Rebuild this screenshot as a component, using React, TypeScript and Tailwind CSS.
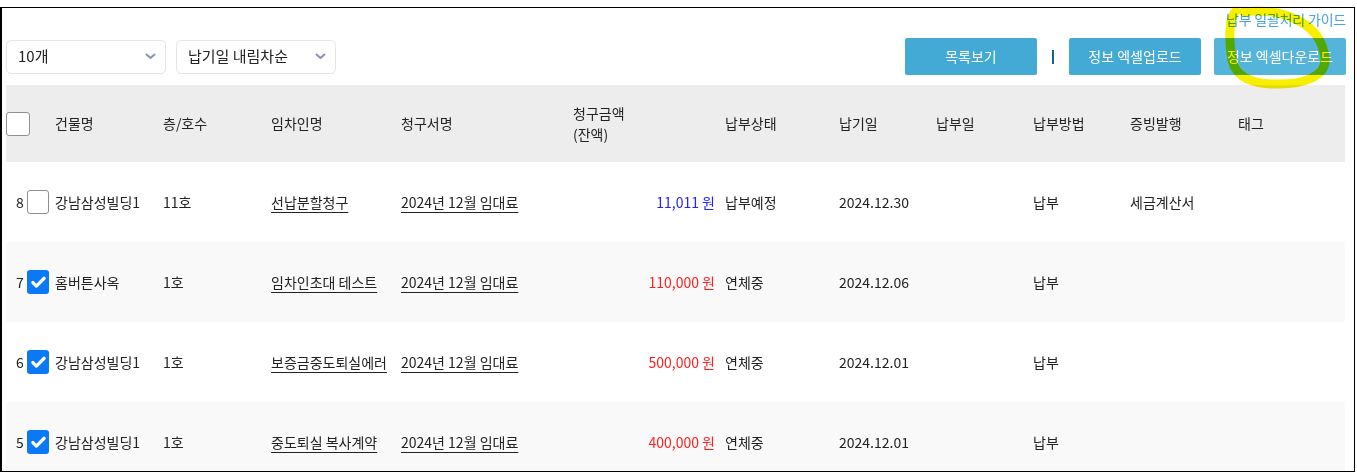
import { Check } from "lucide-react";

type Row = {
  no: number;
  checked: boolean;
  building: string;
  unit: string;
  tenant: string;
  bill: string;
  amount: string;
  overdue: boolean;
  status: string;
  due: string;
  paidAt: string;
  method: string;
  proof: string;
  tag: string;
};

const rows: Row[] = [
  { no: 8, checked: false, building: "강남삼성빌딩1", unit: "11호", tenant: "선납분할청구", bill: "2024년 12월 임대료", amount: "11,011", overdue: false, status: "납부예정", due: "2024.12.30", paidAt: "", method: "납부", proof: "세금계산서", tag: "" },
  { no: 7, checked: true, building: "홈버튼사옥", unit: "1호", tenant: "임차인초대 테스트", bill: "2024년 12월 임대료", amount: "110,000", overdue: true, status: "연체중", due: "2024.12.06", paidAt: "", method: "납부", proof: "", tag: "" },
  { no: 6, checked: true, building: "강남삼성빌딩1", unit: "1호", tenant: "보증금중도퇴실에러", bill: "2024년 12월 임대료", amount: "500,000", overdue: true, status: "연체중", due: "2024.12.01", paidAt: "", method: "납부", proof: "", tag: "" },
  { no: 5, checked: true, building: "강남삼성빌딩1", unit: "1호", tenant: "중도퇴실 복사계약", bill: "2024년 12월 임대료", amount: "400,000", overdue: true, status: "연체중", due: "2024.12.01", paidAt: "", method: "납부", proof: "", tag: "" },
];

const cols = "grid grid-cols-[157px_108px_130px_172px_152px_114px_97px_97px_97px_108px_1fr]";

function Select({ label }: { label: string }) {
  return (
    <div className="flex h-[34px] w-[160px] items-center justify-between rounded-[5px] border border-[#e4e6ea] bg-white pl-[11px] pr-[9px] text-[15px] text-[#222]">
      <span>{label}</span>
      <svg width="11" height="7" viewBox="0 0 11 7" aria-hidden="true">
        <path d="M1.5 1.5 L5.5 5 L9.5 1.5" fill="none" stroke="#8a94ab" strokeWidth="2" strokeLinecap="round" strokeLinejoin="round" />
      </svg>
    </div>
  );
}

function Box({ checked, className = "" }: { checked: boolean; className?: string }) {
  if (checked) {
    return (
      <div className={`flex items-center justify-center rounded-[3px] bg-[#0b78f6] ${className}`}>
        <Check className="h-[17px] w-[17px] text-white" strokeWidth={4.5} aria-hidden="true" />
      </div>
    );
  }
  return <div className={`rounded-[3px] border border-[#8f8f8f] bg-white ${className}`} />;
}

export default function App() {
  return (
    <div className="relative h-[472px] w-[1357px] overflow-hidden bg-white font-['Noto_Sans_CJK_KR','Noto_Sans',sans-serif] text-[14px] text-[#222]">
      <div className="mt-[7px] h-[465px] w-[1355px] overflow-hidden border border-l-2 border-black pl-[4px] pr-[8px]">
        <div className="flex h-[22px] justify-end">
          <a className="text-[14px] tracking-[-0.2px] leading-[22px] text-[#46a7d6]">납부 일괄처리 가이드</a>
        </div>

        <div className="mt-[8px] flex h-[37px] items-center">
          <div className="flex items-center gap-[10px]">
            <Select label="10개" />
            <Select label="납기일 내림차순" />
          </div>
          <div className="ml-auto flex items-center">
            <button type="button" className="h-[37px] w-[132px] rounded-[2px] bg-[#42aad4] text-[14px] text-white">목록보기</button>
            <div className="mx-[15px] h-[14px] w-[2px] bg-[#1f5f8f]" />
            <button type="button" className="h-[37px] w-[132px] rounded-[2px] bg-[#42aad4] text-[14px] text-white">정보 엑셀업로드</button>
            <button type="button" className="ml-[13px] h-[37px] w-[132px] rounded-[2px] bg-[#55b4da] text-[14px] text-white">정보 엑셀다운로드</button>
          </div>
        </div>

        <div className="mt-[10px] w-[1339px]">
          <div className={`${cols} h-[77px] items-center bg-[#ededed]`}>
            <div className="flex items-center">
              <Box checked={false} className="h-[24px] w-[24px]" />
              <span className="ml-[25px]">건물명</span>
            </div>
            <div>층/호수</div>
            <div>임차인명</div>
            <div>청구서명</div>
            <div className="leading-[21px]">
              청구금액
              <br />
              (잔액)
            </div>
            <div>납부상태</div>
            <div>납기일</div>
            <div>납부일</div>
            <div>납부방법</div>
            <div>증빙발행</div>
            <div>태그</div>
          </div>

          {rows.map((r, i) => (
            <div key={r.no} className={`${cols} h-[80px] items-center ${i % 2 === 1 ? "bg-[#f9f9f9]" : "bg-white"}`}>
              <div className="flex items-center">
                <span className="ml-[10px] w-[8px]">{r.no}</span>
                <Box checked={r.checked} className="ml-[3px] h-[24px] w-[22px]" />
                <span className="ml-[6px]">{r.building}</span>
              </div>
              <div>{r.unit}</div>
              <div>
                <span className="underline underline-offset-[4px]">{r.tenant}</span>
              </div>
              <div>
                <span className="underline underline-offset-[4px]">{r.bill}</span>
              </div>
              <div className={`pr-[10px] text-right ${r.overdue ? "text-[#ff1f1f]" : "text-[#2121ff]"}`}>
                {r.amount} 원
              </div>
              <div>{r.status}</div>
              <div>{r.due}</div>
              <div>{r.paidAt}</div>
              <div>{r.method}</div>
              <div>{r.proof}</div>
              <div>{r.tag}</div>
            </div>
          ))}
        </div>
      </div>

      <svg className="pointer-events-none absolute left-0 top-0 mix-blend-multiply" width="1357" height="472" viewBox="0 0 1357 472" aria-hidden="true">
        <path
          d="M1236 11 C1228 18 1229 42 1232 60 C1236 78 1254 84 1274 84 C1302 85 1327 77 1325 58 C1323 42 1315 30 1301 22 C1287 14 1267 9 1244 12"
          fill="none"
          stroke="#f8ee00"
          strokeWidth="9"
          strokeLinecap="round"
          strokeLinejoin="round"
        />
      </svg>
    </div>
  );
}
